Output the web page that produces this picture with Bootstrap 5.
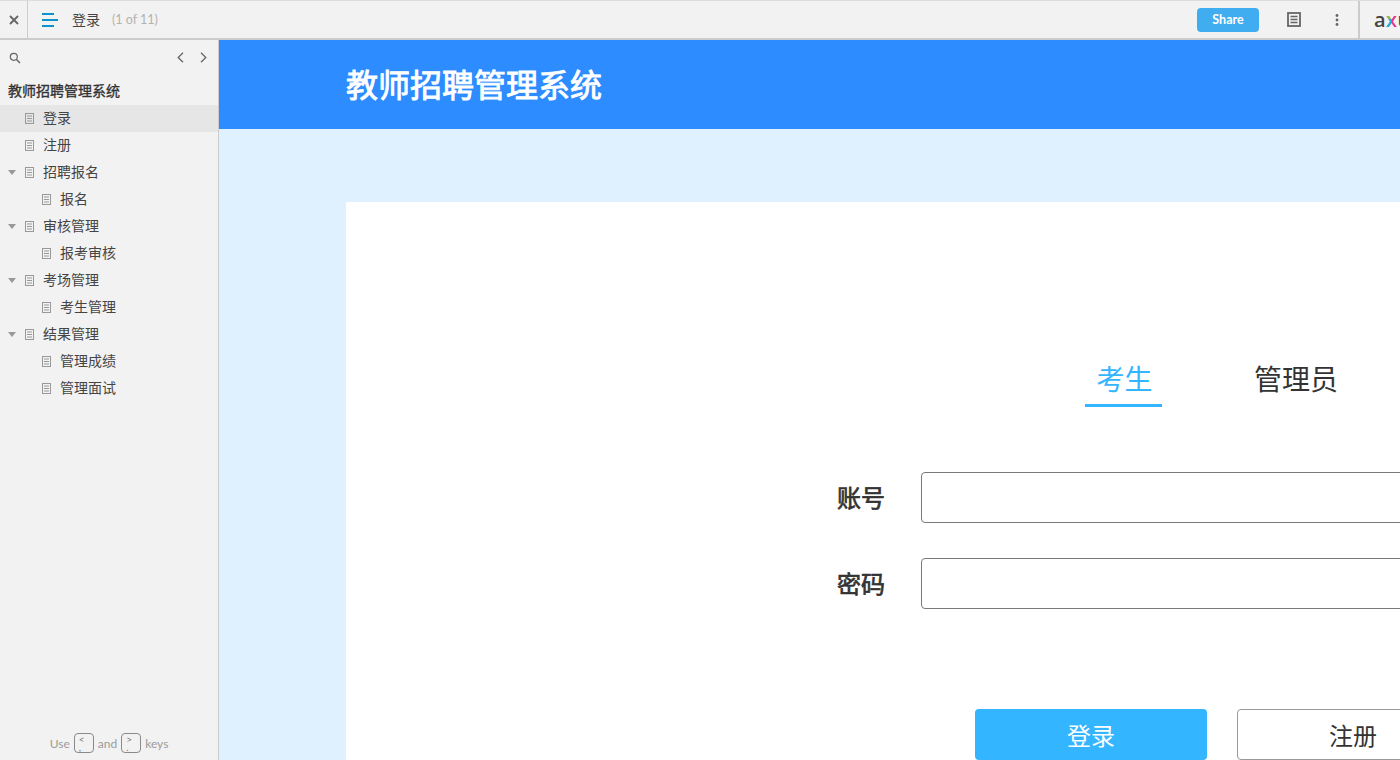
<!DOCTYPE html>
<html lang="zh-CN">

<head>
  <meta charset="UTF-8" />
  <title>登录</title>
  <link href="https://cdn.jsdelivr.net/npm/bootstrap@5.3.0/dist/css/bootstrap.min.css" rel="stylesheet" />
  <style>
    html, body { height: 760px; overflow: hidden; }
    body { font-family: "Noto Sans", "Noto Sans CJK SC", sans-serif; color: #333; background: #f2f2f2; width: 1400px; }

    .topbar { height: 40px; background: #f2f2f2; border-top: 1px solid #ddd; border-bottom: 2px solid #ccc; }
    .top-close { width: 28px; height: 37px; border-right: 1px solid #ccc; }
    .top-toggle { width: 44px; padding-left: 14px; }
    .page-name { font-size: 14px; color: #444; }
    .page-count { font-family: Lato, sans-serif; font-size: 12.5px; color: #b3b3b3; margin: 1px 0 0 12px; }
    .share-btn { width: 62px; height: 24px; background: #3fadf0; color: #fff; font-family: Lato, sans-serif; font-size: 12.5px; font-weight: 700; border-radius: 4px; border: 0; padding: 2px 0 0; }
    .top-notes { margin-left: 28px; }
    .top-more { margin-left: 34px; margin-right: 19px; }
    .logo-wrap { width: 42px; height: 37px; border-left: 2px solid #ccc; padding-left: 14px; overflow: hidden; }
    .logo-text { font-family: "Open Sans", sans-serif; font-size: 20px; font-weight: 600; color: #444; line-height: 1; letter-spacing: .4px; }
    .logo-x { background: linear-gradient(to bottom, #8cc63f 50%, #19b5d8 50%) left / 50% 100% no-repeat, #e6348f; -webkit-background-clip: text; background-clip: text; color: transparent; font-weight: 600; }

    .main-area { height: 720px; }
    .side-pane { width: 219px; background: #f2f2f2; border-right: 1px solid #ccc; position: relative; }
    .side-tools { height: 35px; padding: 0 9px; }
    .side-arrows { gap: 16px; margin-right: 2px; }
    .site-title { font-size: 14px; color: #333; padding-left: 8px; height: 30px; line-height: 32px; -webkit-text-stroke: .35px #333; }
    .tree-row { height: 27px; font-size: 14px; color: #444; }
    .tree-row.active { background: #e6e6e6; }
    .tree-label { margin-top: -2px; }
    .tree-caret { width: 25px; flex: none; padding-left: 8px; }
    .tree-caret i { display: block; width: 0; height: 0; border-left: 4px solid transparent; border-right: 4px solid transparent; border-top: 5px solid #999; }
    .tree-icon { flex: none; margin-right: 9px; }
    .tree-icon.is-child { margin-left: 17px; }
    .key-hint { position: absolute; left: 0; right: 0; top: 692px; height: 21px; font-family: Lato, sans-serif; font-size: 12px; color: #9b9b9b; gap: 4px; }
    .key-word { padding-top: 3px; }
    .key-cap { width: 20px; height: 20px; border: 1px solid #8a8a8a; border-radius: 4px; font-size: 10px; line-height: 8px; padding: 1px 0 0 4px; color: #777; overflow: hidden; }

    .canvas-area { flex: 1; background: #dff1ff; overflow: hidden; min-width: 0; }
    .site-head { height: 89px; background: #2d8cff; padding: 4px 0 0 127px; }
    .site-head h1 { font-family: "Liberation Sans", "Noto Sans CJK SC", sans-serif; font-size: 32px; font-weight: 400; color: #fff; margin: 0; -webkit-text-stroke: .9px #fff; }
    .login-panel { width: 1300px; height: 640px; background: #fff; margin: 73px 0 0 127px; padding-top: 156px; }
    .tab-row { padding-left: 739px; height: 49px; margin-bottom: 65px; }
    .tab-item { font-size: 28px; line-height: 42px; text-align: center; color: #333; }
    .tab-on { width: 77px; height: 49px; color: #33b5ff; border-bottom: 3px solid #33b5ff; margin-right: 92px; padding-left: 2px; }
    .form-line { display: flex; align-items: center; height: 51px; margin-bottom: 35px; }
    .form-name { width: 575px; text-align: right; padding-right: 36px; font-size: 24px; color: #333; -webkit-text-stroke: .7px #333; }
    .form-box { width: 600px; height: 51px; border: 1px solid #797979; border-radius: 4px; background: #fff; padding: 0 10px; box-shadow: none; }
    .form-box:focus { outline: none; }
    .action-row { padding-left: 629px; gap: 30px; margin-top: 100px; }
    .btn-login, .btn-reg { width: 232px; height: 51px; font-size: 24px; line-height: 1; border-radius: 4px; padding: 2px 0 0; }
    .btn-login { background: #33b5ff; color: #fff; border: 0; }
    .btn-reg { background: #fff; color: #333; border: 1px solid #999; }
  </style>
</head>

<body>
  <svg width="0" height="0" class="position-absolute">
    <symbol id="page-ico" viewBox="0 0 9 11">
      <rect x=".5" y=".5" width="8" height="10" fill="none" stroke="#999" />
      <path d="M2 3h5M2 5.5h5M2 8h5" stroke="#999" fill="none" />
    </symbol>
  </svg>

  <header class="topbar d-flex align-items-center">
    <div class="top-close d-flex align-items-center justify-content-center">
      <svg width="10" height="10" viewBox="0 0 10 10"><path d="M1 1l8 8M9 1l-8 8" stroke="#666" stroke-width="1.8" /></svg>
    </div>
    <div class="top-toggle d-flex">
      <svg width="16" height="14" viewBox="0 0 16 14"><path d="M0 1h12M0 7h16M0 13h12" stroke="#0a93cc" stroke-width="2" /></svg>
    </div>
    <span class="page-name">登录</span>
    <span class="page-count">(1 of 11)</span>
    <div class="ms-auto d-flex align-items-center">
      <button class="share-btn btn" type="button">Share</button>
      <svg class="top-notes" width="14" height="15" viewBox="0 0 14 15"><rect x="1" y="1" width="12" height="13" fill="none" stroke="#666" stroke-width="1.8" /><path d="M3.5 4.5h7M3.5 7.5h7M3.5 10.5h7" stroke="#666" stroke-width="1.5" /></svg>
      <svg class="top-more" width="4" height="12" viewBox="0 0 4 12"><circle cx="2" cy="1.5" r="1.4" fill="#666" /><circle cx="2" cy="6" r="1.4" fill="#666" /><circle cx="2" cy="10.5" r="1.4" fill="#666" /></svg>
      <div class="logo-wrap d-flex align-items-center"><span class="logo-text">a<span class="logo-x">x</span>ure</span></div>
    </div>
  </header>

  <div class="main-area d-flex">
    <aside class="side-pane flex-shrink-0">
      <div class="side-tools d-flex align-items-center justify-content-between">
        <svg width="12" height="12" viewBox="0 0 12 12"><circle cx="4.8" cy="4.8" r="3.5" fill="none" stroke="#666" stroke-width="1.2" /><path d="M7.5 7.5l3.5 3.5" stroke="#666" stroke-width="1.5" /></svg>
        <div class="side-arrows d-flex">
          <svg width="7" height="11" viewBox="0 0 7 11"><path d="M6 .8L1.2 5.5 6 10.2" fill="none" stroke="#666" stroke-width="1.3" /></svg>
          <svg width="7" height="11" viewBox="0 0 7 11"><path d="M1 .8l4.8 4.7L1 10.2" fill="none" stroke="#666" stroke-width="1.3" /></svg>
        </div>
      </div>
      <div class="site-title">教师招聘管理系统</div>
      <div id="tree"></div>
      <div class="key-hint d-flex align-items-center justify-content-center">
        <span class="key-word">Use</span><span class="key-cap">&lt;<br>,</span><span class="key-word">and</span><span class="key-cap">&gt;<br>.</span><span class="key-word">keys</span>
      </div>
    </aside>

    <main class="canvas-area">
      <div class="site-head d-flex align-items-center"><h1>教师招聘管理系统</h1></div>
      <section class="login-panel">
        <div class="tab-row d-flex">
          <div class="tab-item tab-on">考生</div>
          <div class="tab-item">管理员</div>
        </div>
        <div class="form-line"><label class="form-name">账号</label><input class="form-box" type="text"></div>
        <div class="form-line"><label class="form-name">密码</label><input class="form-box" type="password"></div>
        <div class="action-row d-flex">
          <button class="btn btn-login" type="button">登录</button>
          <button class="btn btn-reg" type="button">注册</button>
        </div>
      </section>
    </main>
  </div>

  <script src="https://cdn.jsdelivr.net/npm/bootstrap@5.3.0/dist/js/bootstrap.bundle.min.js"></script>
  <script>
    const treeItems = [
      { name: '登录', active: true },
      { name: '注册' },
      { name: '招聘报名', caret: true },
      { name: '报名', child: true },
      { name: '审核管理', caret: true },
      { name: '报考审核', child: true },
      { name: '考场管理', caret: true },
      { name: '考生管理', child: true },
      { name: '结果管理', caret: true },
      { name: '管理成绩', child: true },
      { name: '管理面试', child: true }
    ];

    document.getElementById('tree').innerHTML = treeItems.map(item => `
      <div class="tree-row d-flex align-items-center ${item.active ? 'active' : ''}">
        <span class="tree-caret">${item.caret ? '<i></i>' : ''}</span>
        <svg class="tree-icon ${item.child ? 'is-child' : ''}" width="9" height="11"><use href="#page-ico" /></svg>
        <span class="tree-label">${item.name}</span>
      </div>`).join('');
  </script>
</body>

</html>
